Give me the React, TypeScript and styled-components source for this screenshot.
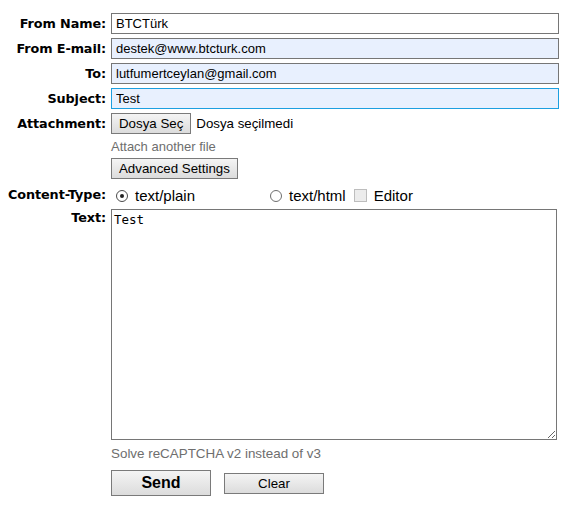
import React from "react";
import styled, { createGlobalStyle } from "styled-components";

const Global = createGlobalStyle`
  html, body { margin: 0; padding: 0; background: #fff; }
  body { font-family: "Liberation Sans", Arial, sans-serif; color: #000; }
`;

const Form = styled.form`
  display: grid;
  grid-template-columns: 99px 448px;
  column-gap: 5px;
  row-gap: 4px;
  padding: 13px 0 0 7px;
`;

const Label = styled.label<{ $top?: boolean }>`
  font-family: "DejaVu Sans", Verdana, sans-serif;
  font-weight: bold;
  font-size: 12.8px;
  text-align: right;
  white-space: nowrap;
  align-self: ${(p) => (p.$top ? "start" : "center")};
  padding-top: ${(p) => (p.$top ? "1px" : "0")};
  letter-spacing: -0.1px;
`;

const Spacer = styled.div``;

const TextInput = styled.input<{ $filled?: boolean; $focus?: boolean }>`
  box-sizing: border-box;
  width: 448px;
  height: 21px;
  margin: 0;
  padding: 0 4px;
  font-family: "Liberation Sans", Arial, sans-serif;
  font-size: 13px;
  color: #000;
  border: 1px solid ${(p) => (p.$focus ? "#1c9fe0" : "#767676")};
  background: ${(p) => (p.$filled ? "#e8f0fe" : "#fff")};
  outline: none;
`;

const Inline = styled.div<{ $gap?: number }>`
  display: flex;
  align-items: center;
  gap: ${(p) => p.$gap ?? 5}px;
`;

const Button = styled.button<{ $w?: number; $h?: number; $big?: boolean }>`
  box-sizing: border-box;
  height: ${(p) => p.$h ?? 21}px;
  width: ${(p) => (p.$w ? `${p.$w}px` : "auto")};
  margin: 0;
  padding: 0 7px;
  font-family: "Liberation Sans", Arial, sans-serif;
  font-size: ${(p) => (p.$big ? "16px" : "13.3px")};
  font-weight: ${(p) => (p.$big ? "bold" : "normal")};
  color: #000;
  border: 1px solid #7a7a7a;
  border-radius: 0;
  background: linear-gradient(#f4f4f4, #dcdcdc);
  cursor: default;
`;

const PlainText = styled.span<{ $size?: number; $color?: string }>`
  font-family: "Liberation Sans", Arial, sans-serif;
  font-size: ${(p) => p.$size ?? 13.3}px;
  color: ${(p) => p.$color ?? "#000"};
  white-space: nowrap;
`;

const Hint = styled.div<{ $size?: number; $h?: number }>`
  font-family: "Liberation Sans", Arial, sans-serif;
  font-size: ${(p) => p.$size ?? 13}px;
  line-height: ${(p) => p.$h ?? 15}px;
  color: #6e6e6e;
  padding-top: 1px;
`;

const OptionRow = styled.div`
  box-sizing: border-box;
  display: flex;
  align-items: center;
  height: 22px;
  padding: 3px 0 0 5px;
`;

const Option = styled.label<{ $w?: number; $ml?: number }>`
  display: flex;
  align-items: center;
  gap: 7px;
  width: ${(p) => (p.$w ? `${p.$w}px` : "auto")};
  margin-left: ${(p) => p.$ml ?? 0}px;
  font-family: "Liberation Sans", Arial, sans-serif;
  font-size: 15px;
`;

const Radio = styled.span<{ $on?: boolean }>`
  box-sizing: border-box;
  width: 12px;
  height: 12px;
  border-radius: 50%;
  border: 1px solid ${(p) => (p.$on ? "#4a4a4a" : "#6e6e6e")};
  background: #fff;
  display: flex;
  align-items: center;
  justify-content: center;
  &::after {
    content: "";
    width: 4px;
    height: 4px;
    border-radius: 50%;
    background: ${(p) => (p.$on ? "#222" : "transparent")};
  }
`;

const Check = styled.span`
  box-sizing: border-box;
  width: 13px;
  height: 13px;
  border: 1px solid #bdbdbd;
  background: #ececec;
`;

const Area = styled.textarea`
  box-sizing: border-box;
  width: 446px;
  height: 231px;
  margin: 0;
  padding: 2px 2px;
  font-family: "DejaVu Sans Mono", "Liberation Mono", monospace;
  font-size: 12.5px;
  border: 1px solid #767676;
  outline: none;
  resize: both;
`;

const Actions = styled.div`
  display: flex;
  align-items: center;
  gap: 13px;
  padding-top: 4px;
`;

export default function App() {
  return (
    <>
      <Global />
      <Form onSubmit={(e) => e.preventDefault()}>
        <Label>From Name:</Label>
        <TextInput defaultValue="BTCTürk" />

        <Label>From E-mail:</Label>
        <TextInput $filled defaultValue="destek@www.btcturk.com" />

        <Label>To:</Label>
        <TextInput $filled defaultValue="lutfumertceylan@gmail.com" />

        <Label>Subject:</Label>
        <TextInput $filled $focus defaultValue="Test" />

        <Label>Attachment:</Label>
        <Inline $gap={5}>
          <Button type="button">Dosya Seç</Button>
          <PlainText>Dosya seçilmedi</PlainText>
        </Inline>

        <Spacer />
        <Hint>Attach another file</Hint>

        <Spacer />
        <div>
          <Button type="button">Advanced Settings</Button>
        </div>

        <Label>Content-Type:</Label>
        <OptionRow>
          <Option $w={154}>
            <Radio $on />
            text/plain
          </Option>
          <Option>
            <Radio />
            text/html
          </Option>
          <Option $ml={8}>
            <Check />
            Editor
          </Option>
        </OptionRow>

        <Label $top>Text:</Label>
        <Area defaultValue="Test" />

        <Spacer />
        <Hint $size={13.4} $h={17}>Solve reCAPTCHA v2 instead of v3</Hint>

        <Spacer />
        <Actions>
          <Button type="submit" $big $w={100} $h={26}>
            Send
          </Button>
          <Button type="button" $w={100} $h={21}>
            Clear
          </Button>
        </Actions>
      </Form>
    </>
  );
}
